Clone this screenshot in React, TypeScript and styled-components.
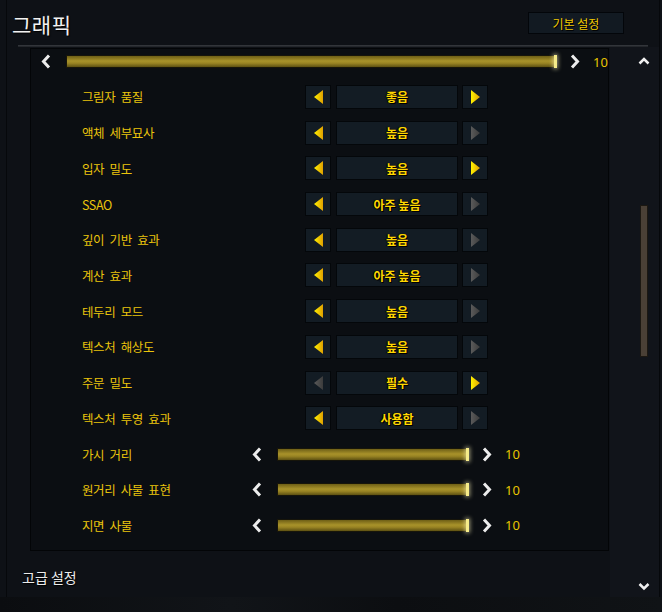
import styled, { createGlobalStyle } from 'styled-components';

const GlobalStyle = createGlobalStyle`
  html, body {
    margin: 0;
    padding: 0;
  }
  body {
    background: #0d1015;
    font-family: 'Noto Sans CJK KR', 'Noto Sans', sans-serif;
  }
`;

const Screen = styled.div`
  width: 662px;
  height: 612px;
  overflow: hidden;
  background: #0e1116;
  display: flex;
  flex-direction: column;
`;

const Frame = styled.div`
  box-sizing: border-box;
  margin-left: 6px;
  width: 654px;
  height: 597px;
  flex-shrink: 0;
  border-left: 1px solid #06080b;
  border-right: 1px solid #06080b;
  display: flex;
  flex-direction: column;
`;

const Header = styled.div`
  height: 45px;
  display: flex;
  justify-content: space-between;
  align-items: flex-start;
  padding: 0 35px 0 5px;
`;

const Title = styled.div`
  margin-top: 12px;
  font-size: 21px;
  line-height: 25px;
  color: #f2f2f2;
  letter-spacing: 0.5px;
  text-shadow: 1px 1px 1px #000;
`;

const ResetButton = styled.div`
  box-sizing: border-box;
  margin-top: 12px;
  width: 96px;
  height: 22px;
  background: #121a22;
  border: 1px solid #03060a;
  color: #f0c800;
  font-size: 12px;
  display: flex;
  align-items: center;
  justify-content: center;
  text-shadow: 1px 1px 0 #000;
`;

const Divider = styled.div`
  height: 2px;
  margin: 0 11px;
  background: linear-gradient(#393c41, #1d2024);
`;

const Main = styled.div`
  flex: 1;
  display: flex;
`;

const LeftCol = styled.div`
  width: 603px;
  display: flex;
  flex-direction: column;
`;

const Panel = styled.div`
  box-sizing: border-box;
  margin: 1px 0 0 23px;
  width: 579px;
  height: 503px;
  border: 1px solid #030507;
  background: #0b0e12;
`;

const TopRow = styled.div`
  height: 25px;
  margin-bottom: 5px;
  padding-left: 10px;
  display: flex;
  align-items: center;
`;

const Row = styled.div`
  height: 35.72px;
  padding-left: 51px;
  display: flex;
  align-items: center;
`;

const Label = styled.div<{ $w: number }>`
  width: ${p => p.$w}px;
  font-size: 12.5px;
  color: #eac40c;
  letter-spacing: -0.4px;
  word-spacing: 3px;
`;

const Selector = styled.div`
  display: flex;
  align-items: center;
`;

const ArrowBox = styled.div<{ $gap: number }>`
  box-sizing: border-box;
  width: 26px;
  height: 24px;
  margin-left: ${p => p.$gap}px;
  background: #131c24;
  border: 1px solid #04070a;
  display: flex;
  align-items: center;
  justify-content: center;
`;

const ValueBox = styled.div`
  box-sizing: border-box;
  width: 122px;
  height: 24px;
  margin-left: 5px;
  background: #131c24;
  border: 1px solid #04070a;
  display: flex;
  align-items: center;
  justify-content: center;
  font-size: 12px;
  font-weight: bold;
  color: #ffd800;
  text-shadow: 1px 1px 0 #000, -1px 0 1px #000;
`;

const Slider = styled.div`
  display: flex;
  align-items: center;
`;

const Bar = styled.div<{ $w: number }>`
  position: relative;
  box-sizing: border-box;
  width: ${p => p.$w}px;
  height: 13px;
  margin: 0 13px 0 15px;
  border: 1px solid #17150a;
  background: linear-gradient(#6e5f16, #a8922a 45%, #9a8524 65%, #5e5112);
  &::after {
    content: '';
    position: absolute;
    right: -1px;
    top: -1px;
    width: 3px;
    height: 13px;
    background: #f6ec8a;
    box-shadow: 0 0 4px 1px rgba(255, 248, 190, 0.6);
  }
`;

const SliderValue = styled.div`
  margin-left: 13px;
  font-family: 'Noto Sans', sans-serif;
  font-size: 13px;
  color: #e8c400;
`;

const Footer = styled.div`
  margin-top: 16px;
  padding-left: 15px;
  font-size: 14px;
  line-height: 20px;
  color: #ececec;
  text-shadow: 1px 1px 1px #000;
`;

const SideCol = styled.div`
  flex: 1;
  background: #11141a;
  display: flex;
  flex-direction: column;
  padding-left: 28px;
`;

const UpIcon = styled.div`
  margin-top: 10px;
  width: 12px;
  height: 8px;
  display: flex;
`;

const Thumb = styled.div`
  box-sizing: border-box;
  margin: 140px 0 0 2px;
  width: 8px;
  height: 152px;
  background: #4a4036;
  border: 1px solid #1c1812;
`;

const DownIcon = styled.div`
  margin-top: auto;
  margin-bottom: 6px;
  width: 12px;
  height: 9px;
  display: flex;
`;

const BottomStrip = styled.div`
  flex: 1;
  background: linear-gradient(90deg, #0b0d10, #111418 35%, #0c0e11 60%, #101316);
`;

type Dir = 'left' | 'right';

const Chevron = ({ dir }: { dir: Dir }) => (
  <svg width="10" height="15" viewBox="0 0 10 15">
    <path
      d={dir === 'left' ? 'M8 1.5 L2.5 7.5 L8 13.5' : 'M2 1.5 L7.5 7.5 L2 13.5'}
      fill="none"
      stroke="#ececec"
      strokeWidth="3"
    />
  </svg>
);

const Triangle = ({ dir, on }: { dir: Dir; on: boolean }) => {
  const id = `tri-${dir}-${on ? 'on' : 'off'}`;
  return (
    <svg width="9" height="14" viewBox="0 0 9 14">
      <defs>
        <linearGradient id={id} x1="0" y1="0" x2="1" y2="0">
          <stop offset="0" stopColor={on ? '#fff200' : '#5a5a5a'} />
          <stop offset="1" stopColor={on ? '#e0a000' : '#3c3c3c'} />
        </linearGradient>
      </defs>
      <polygon points={dir === 'left' ? '9,0 0,7 9,14' : '0,0 9,7 0,14'} fill={`url(#${id})`} />
    </svg>
  );
};

type SelectRow = { label: string; value: string; left: boolean; right: boolean };

const selects: SelectRow[] = [
  { label: '그림자 품질', value: '좋음', left: true, right: true },
  { label: '액체 세부묘사', value: '높음', left: true, right: false },
  { label: '입자 밀도', value: '높음', left: true, right: true },
  { label: 'SSAO', value: '아주 높음', left: true, right: false },
  { label: '깊이 기반 효과', value: '높음', left: true, right: false },
  { label: '계산 효과', value: '아주 높음', left: true, right: false },
  { label: '테두리 모드', value: '높음', left: true, right: false },
  { label: '텍스처 해상도', value: '높음', left: true, right: false },
  { label: '주문 밀도', value: '필수', left: false, right: true },
  { label: '텍스처 투영 효과', value: '사용함', left: true, right: false },
];

const sliders = ['가시 거리', '원거리 사물 표현', '지면 사물'];

const SliderControl = ({ width, value }: { width: number; value: number }) => (
  <Slider>
    <Chevron dir="left" />
    <Bar $w={width} />
    <Chevron dir="right" />
    <SliderValue>{value}</SliderValue>
  </Slider>
);

export default function App() {
  return (
    <>
      <GlobalStyle />
      <Screen>
        <Frame>
          <Header>
            <Title>그래픽</Title>
            <ResetButton>기본 설정</ResetButton>
          </Header>
          <Divider />
          <Main>
            <LeftCol>
              <Panel>
                <TopRow>
                  <SliderControl width={491} value={10} />
                </TopRow>
                {selects.map(s => (
                  <Row key={s.label}>
                    <Label $w={223}>{s.label}</Label>
                    <Selector>
                      <ArrowBox $gap={0}><Triangle dir="left" on={s.left} /></ArrowBox>
                      <ValueBox>{s.value}</ValueBox>
                      <ArrowBox $gap={4}><Triangle dir="right" on={s.right} /></ArrowBox>
                    </Selector>
                  </Row>
                ))}
                {sliders.map(name => (
                  <Row key={name}>
                    <Label $w={170}>{name}</Label>
                    <SliderControl width={192} value={10} />
                  </Row>
                ))}
              </Panel>
              <Footer>고급 설정</Footer>
            </LeftCol>
            <SideCol>
              <UpIcon>
                <svg width="12" height="8" viewBox="0 0 12 8">
                  <path d="M1.5 6.5 L6 2 L10.5 6.5" fill="none" stroke="#f0f0f0" strokeWidth="2.5" />
                </svg>
              </UpIcon>
              <Thumb />
              <DownIcon>
                <svg width="12" height="9" viewBox="0 0 12 9">
                  <path d="M1.5 2 L6 6.5 L10.5 2" fill="none" stroke="#f0f0f0" strokeWidth="2.5" />
                </svg>
              </DownIcon>
            </SideCol>
          </Main>
        </Frame>
        <BottomStrip />
      </Screen>
    </>
  );
}
